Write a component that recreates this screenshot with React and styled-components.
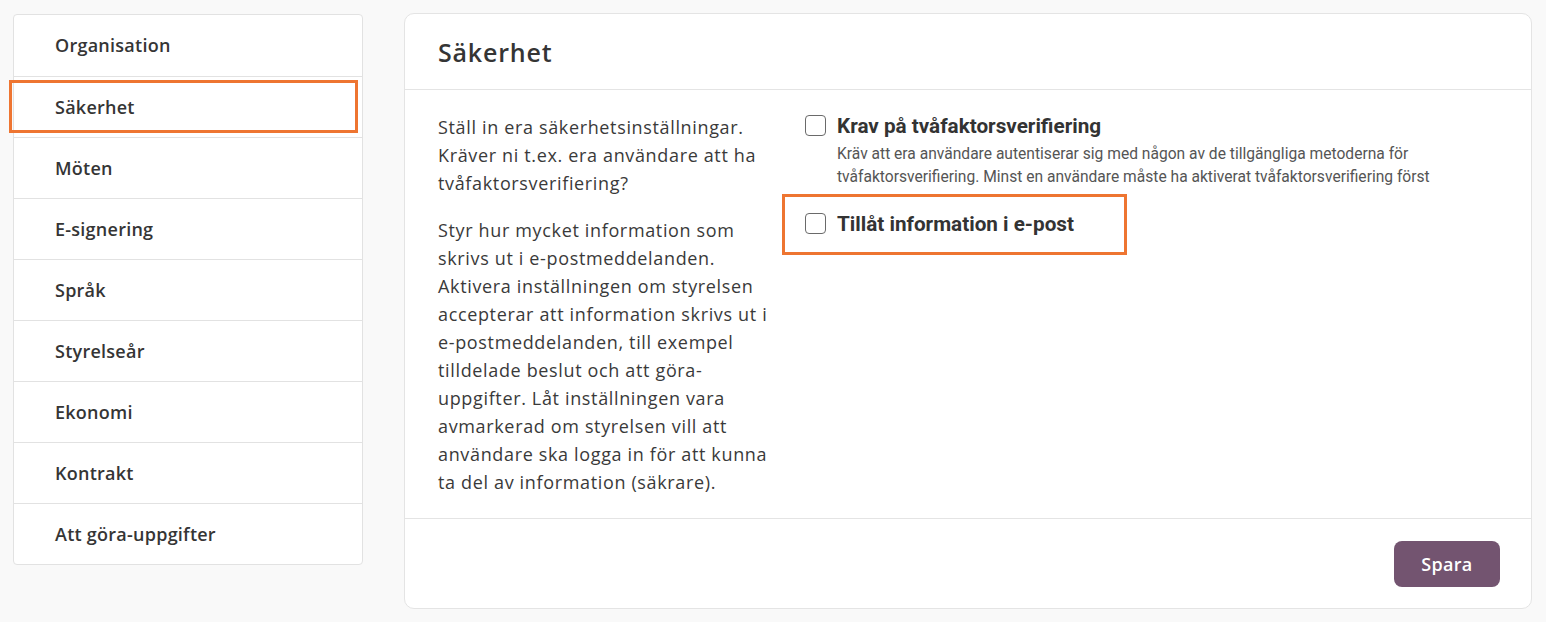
import React from "react";
import styled, { createGlobalStyle } from "styled-components";

const Global = createGlobalStyle`
  html, body { margin: 0; padding: 0; background: #f9f9f9; }
  body { font-family: "Open Sans", "Liberation Sans", sans-serif; color: #333; }
  * { box-sizing: border-box; }
`;

const Page = styled.div`
  display: flex;
  align-items: flex-start;
  gap: 41px;
  padding: 13px 14px 14px 13px;
  width: 1546px;
`;

const Sidebar = styled.nav`
  width: 350px;
  flex: none;
  margin-top: 1px;
  background: #fff;
  border: 1px solid #e2e2e2;
  border-radius: 4px;
`;

const NavItem = styled.div`
  position: relative;
  height: 61px;
  display: flex;
  align-items: center;
  padding-left: 41px;
  padding-bottom: 1px;
  font-size: 18px;
  font-weight: 600;
  letter-spacing: 0.25px;
  color: #353535;
  border-top: ${(p) => (p.$first ? "none" : "1px solid #e2e2e2")};
`;

const Highlight = styled.span`
  position: absolute;
  border: 3px solid #ee7531;
  pointer-events: none;
  top: ${(p) => p.$t}px;
  bottom: ${(p) => p.$b}px;
  left: ${(p) => p.$l}px;
  right: ${(p) => p.$r}px;
`;

const Card = styled.section`
  flex: 1;
  background: #fff;
  border: 1px solid #e4e4e4;
  border-radius: 10px;
`;

const CardHeader = styled.header`
  height: 76px;
  display: flex;
  align-items: center;
  padding-left: 33px;
  border-bottom: 1px solid #e4e4e4;
`;

const Title = styled.h1`
  margin: 0;
  font-size: 25px;
  font-weight: 600;
  letter-spacing: 0.8px;
  color: #353535;
`;

const CardBody = styled.div`
  display: flex;
  gap: 22px;
  padding: 23px 33px 22px;
  border-bottom: 1px solid #e4e4e4;
`;

const Intro = styled.div`
  width: 345px;
  flex: none;
  font-size: 18px;
  letter-spacing: 0.65px;
  line-height: 28px;
  color: #3a3a3a;
  white-space: nowrap;
`;

const Para = styled.p`
  margin: 0 0 19px;
  &:last-child { margin-bottom: 0; }
`;

const Options = styled.div`
  display: flex;
  flex-direction: column;
  align-items: flex-start;
  gap: 23px;
  padding-top: 1px;
`;

const Option = styled.div`
  position: relative;
  display: grid;
  grid-template-columns: 21px auto;
  column-gap: 11px;
  align-items: start;
`;

const Box = styled.span`
  width: 21px;
  height: 21px;
  margin-top: 1px;
  border: 1.5px solid #6a6a6a;
  border-radius: 4px;
  background: #fff;
`;

const Label = styled.div`
  font-family: "Roboto", "Liberation Sans", sans-serif;
  font-weight: 700;
  font-size: 20.7px;
  line-height: 24px;
  color: #333;
`;

const Desc = styled.div`
  grid-column: 2;
  margin-top: 5px;
  font-family: "Roboto", "Liberation Sans", sans-serif;
  font-size: 15.6px;
  line-height: 23px;
  color: #555;
`;

const Footer = styled.footer`
  height: 89px;
  display: flex;
  align-items: center;
  justify-content: flex-end;
  padding-right: 31px;
`;

const Button = styled.button`
  width: 106px;
  height: 46px;
  border: none;
  border-radius: 8px;
  background: #735470;
  color: #fff;
  font-family: inherit;
  font-size: 18px;
  font-weight: 600;
  letter-spacing: 0.3px;
  cursor: pointer;
`;

const items = [
  "Organisation",
  "Säkerhet",
  "Möten",
  "E-signering",
  "Språk",
  "Styrelseår",
  "Ekonomi",
  "Kontrakt",
  "Att göra-uppgifter",
];

export default function App() {
  return (
    <>
      <Global />
      <Page>
        <Sidebar>
          {items.map((it, i) => (
            <NavItem key={it} $first={i === 0}>
              {it}
              {it === "Säkerhet" && <Highlight $t={3} $b={4} $l={-5} $r={4} />}
            </NavItem>
          ))}
        </Sidebar>
        <Card>
          <CardHeader>
            <Title>Säkerhet</Title>
          </CardHeader>
          <CardBody>
            <Intro>
              <Para>
                Ställ in era säkerhetsinställningar.
                <br />
                Kräver ni t.ex. era användare att ha
                <br />
                tvåfaktorsverifiering?
              </Para>
              <Para>
                Styr hur mycket information som
                <br />
                skrivs ut i e-postmeddelanden.
                <br />
                Aktivera inställningen om styrelsen
                <br />
                accepterar att information skrivs ut i
                <br />
                e-postmeddelanden, till exempel
                <br />
                tilldelade beslut och att göra-
                <br />
                uppgifter. Låt inställningen vara
                <br />
                avmarkerad om styrelsen vill att
                <br />
                användare ska logga in för att kunna
                <br />
                ta del av information (säkrare).
              </Para>
            </Intro>
            <Options>
              <Option>
                <Box />
                <Label>Krav på tvåfaktorsverifiering</Label>
                <Desc>
                  Kräv att era användare autentiserar sig med någon av de tillgängliga
                  metoderna för
                  <br />
                  tvåfaktorsverifiering. Minst en användare måste ha aktiverat
                  tvåfaktorsverifiering först
                </Desc>
              </Option>
              <Option>
                <Box />
                <Label>Tillåt information i e-post</Label>
                <Highlight $t={-18} $b={-19} $l={-23} $r={-53} />
              </Option>
            </Options>
          </CardBody>
          <Footer>
            <Button>Spara</Button>
          </Footer>
        </Card>
      </Page>
    </>
  );
}
